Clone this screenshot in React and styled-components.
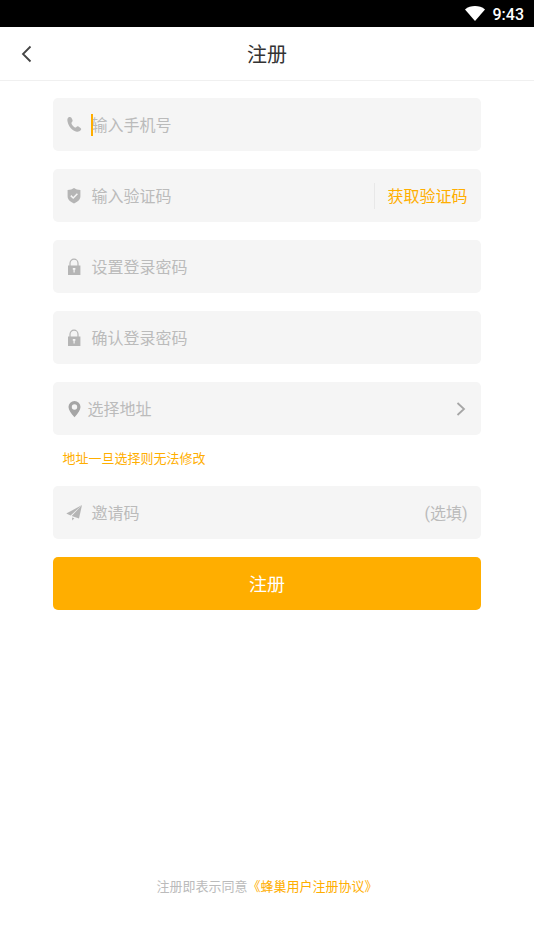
import React from "react";
import styled, { createGlobalStyle } from "styled-components";

const App = () => {
    return (
        <Page>
            <GlobalStyle />
            <StatusBar>
                <svg width="20" height="15" viewBox="0 0 20 15">
                    <path d="M0 3.4C5.6-1 14.4-1 20 3.4L10 15z" fill="#fff" />
                </svg>
                <Time>9:43</Time>
            </StatusBar>
            <Header>
                <BackButton type="button" aria-label="返回">
                    <svg width="12" height="18" viewBox="0 0 12 18">
                        <path d="M9.500 1.500L2 9l7.500 7.500" fill="none" stroke="#444" strokeWidth="1.800" />
                    </svg>
                </BackButton>
                <Title>注册</Title>
            </Header>
            <Form onSubmit={(e) => e.preventDefault()}>
                <Field>
                    <PhoneIcon />
                    <InputWrap>
                        <Caret />
                        <Input type="tel" aria-label="手机号" placeholder="输入手机号" />
                    </InputWrap>
                </Field>
                <Field>
                    <ShieldIcon />
                    <Input type="text" aria-label="验证码" placeholder="输入验证码" />
                    <CodeButton type="button">获取验证码</CodeButton>
                </Field>
                <Field>
                    <LockIcon />
                    <Input type="password" aria-label="登录密码" placeholder="设置登录密码" />
                </Field>
                <Field>
                    <LockIcon />
                    <Input type="password" aria-label="确认密码" placeholder="确认登录密码" />
                </Field>
                <div>
                    <Field $gap="5px">
                        <PinIcon />
                        <Select aria-label="地址" defaultValue="">
                            <option value="">选择地址</option>
                        </Select>
                        <svg width="12" height="14" viewBox="0 0 12 14">
                            <path d="M1.500 1L8 7l-6.500 6" fill="none" stroke="#a6a6a6" strokeWidth="1.800" />
                        </svg>
                    </Field>
                    <Note>地址一旦选择则无法修改</Note>
                </div>
                <Field>
                    <PlaneIcon />
                    <Input type="text" id="invite" aria-label="邀请码" placeholder="邀请码" />
                    <Optional htmlFor="invite">(选填)</Optional>
                </Field>
                <SubmitButton type="submit">注册</SubmitButton>
            </Form>
            <Footer>
                注册即表示同意<a href="#agreement">《蜂巢用户注册协议》</a>
            </Footer>
        </Page>
    );
};

const PhoneIcon = () => (
    <Icon viewBox="0 0 16 18">
        <path
            d="M2.600 1.300C3.500.6 4.800.8 5.400 1.700l1 2.100c.4.900.2 1.600-.4 2.200-.6.600-.7 1-.4 1.700.7 1.600 1.700 2.800 3.300 3.700.6.300 1 .2 1.500-.4.600-.7 1.300-.8 2.100-.4l2 1.300c.8.600.9 1.400.3 2.200-1 1.200-2.400 1.900-4 1.600C6.500 14.800 2.400 10.500 1.500 5.200 1.200 3.600 1.400 2.300 2.600 1.300z"
            fill="#b5b5b5"
        />
    </Icon>
);

const ShieldIcon = () => (
    <Icon viewBox="0 0 16 18">
        <path
            d="M8 1c1.700 1.200 3.800 1.900 6.400 2v6.200c0 3.300-2.500 5.500-6.400 7.300-3.900-1.800-6.400-4-6.400-7.300V3C4.200 2.900 6.300 2.200 8 1z"
            fill="#b5b5b5"
        />
        <path d="M4.800 8.600l2.400 2.400 4.200-4.300" fill="none" stroke="#f5f5f5" strokeWidth="1.500" />
    </Icon>
);

const LockIcon = () => (
    <Icon viewBox="0 0 16 18">
        <path d="M4 8V5.200a4 4 0 0 1 8 0V8" fill="none" stroke="#b5b5b5" strokeWidth="1.200" />
        <path d="M2 7.500h12.400V17H2z" fill="#b5b5b5" />
        <path d="M6.800 10h2.600v1.800h-.7v2.700H7.500v-2.700h-.7z" fill="#f5f5f5" />
    </Icon>
);

const PinIcon = () => (
    <Icon viewBox="0 0 16 18">
        <path
            d="M8.500 1a6 6 0 0 1 6 6c0 3-2.500 6.500-6 10.200C5 13.500 2.500 10 2.500 7a6 6 0 0 1 6-6zm0 3.300a2.700 2.700 0 1 0 0 5.400 2.700 2.700 0 0 0 0-5.400z"
            fill="#a5a5a5"
            fillRule="evenodd"
        />
    </Icon>
);

const PlaneIcon = () => (
    <Icon viewBox="0 0 16 18">
        <path d="M16 1L.3 9.600l4.300 1.900z" fill="#b5b5b5" />
        <path d="M16 1L5.700 12l7.300 2.400z" fill="#b5b5b5" />
        <path d="M6 13.400l2.300.8L6.300 16.400z" fill="#b5b5b5" />
    </Icon>
);

const GlobalStyle = createGlobalStyle`
    * {
        box-sizing: border-box;
    }

    body {
        margin: 0;
        background: #fff;
    }

    body,
    button,
    input,
    select {
        font-family: Roboto, "Noto Sans CJK SC", sans-serif;
    }
`;

const Page = styled.div`
    min-height: 100vh;
    display: flex;
    flex-direction: column;
`;

const StatusBar = styled.div`
    height: 27px;
    padding: 0 10px;
    display: flex;
    align-items: center;
    justify-content: flex-end;
    gap: 8px;
    background: #000;
    color: #fff;
`;

const Time = styled.span`
    padding-top: 2px;
    font-size: 16px;
    font-weight: 500;
    line-height: 20px;
`;

const Header = styled.header`
    height: 54px;
    display: grid;
    grid-template-columns: 54px 1fr 54px;
    align-items: center;
    border-bottom: 1px solid #f0f0f0;
`;

const BackButton = styled.button`
    height: 53px;
    padding: 0;
    border: none;
    background: none;
    display: flex;
    align-items: center;
    justify-content: center;
    cursor: pointer;
`;

const Title = styled.h1`
    margin: 0;
    padding-top: 2px;
    font-size: 20px;
    font-weight: 400;
    line-height: 28px;
    text-align: center;
    color: #333;
`;

const Form = styled.form`
    flex: 1;
    padding: 17px 10%;
    display: flex;
    flex-direction: column;
    gap: 18px;
`;

const Field = styled.div`
    height: 53px;
    padding: 0 13px;
    display: flex;
    align-items: center;
    gap: ${({ $gap }) => $gap || "9px"};
    background: #f5f5f5;
    border-radius: 5px;
`;

const Icon = styled.svg`
    flex: none;
    width: 16px;
    height: 18px;
`;

const InputWrap = styled.div`
    flex: 1;
    display: flex;
    position: relative;
`;

const Caret = styled.span`
    position: absolute;
    top: 2px;
    left: 0;
    width: 2px;
    height: 22px;
    background: #ffae00;
`;

const Input = styled.input`
    flex: 1;
    min-width: 0;
    height: 26px;
    padding: 2px 0 0;
    border: none;
    outline: none;
    background: none;
    font-size: 16px;
    color: #333;
    caret-color: #ffae00;

    &::placeholder {
        color: #bbb;
        opacity: 1;
    }
`;

const CodeButton = styled.button`
    height: 26px;
    padding: 2px 0 0 13px;
    border: none;
    border-left: 1px solid #e8e8e8;
    background: none;
    font-size: 16px;
    line-height: 24px;
    color: #ffae00;
    cursor: pointer;
`;

const Select = styled.select`
    flex: 1;
    height: 26px;
    padding: 2px 0 0;
    border: none;
    outline: none;
    appearance: none;
    background: none;
    font-size: 16px;
    color: #bbb;
`;

const Note = styled.p`
    margin: 15px 9px 0;
    font-size: 13px;
    line-height: 18px;
    color: #ffae00;
`;

const Optional = styled.label`
    padding-top: 2px;
    font-size: 16px;
    line-height: 24px;
    color: #bbb;
`;

const SubmitButton = styled.button`
    height: 53px;
    padding: 0 0 2px;
    border: none;
    border-radius: 5px;
    background: #ffae00;
    font-size: 18px;
    color: #fff;
    cursor: pointer;
`;

const Footer = styled.footer`
    padding-bottom: 52px;
    font-size: 13px;
    line-height: 20px;
    text-align: center;
    color: #bbb;

    a {
        color: #ffae00;
        text-decoration: none;
    }
`;

export default App;
